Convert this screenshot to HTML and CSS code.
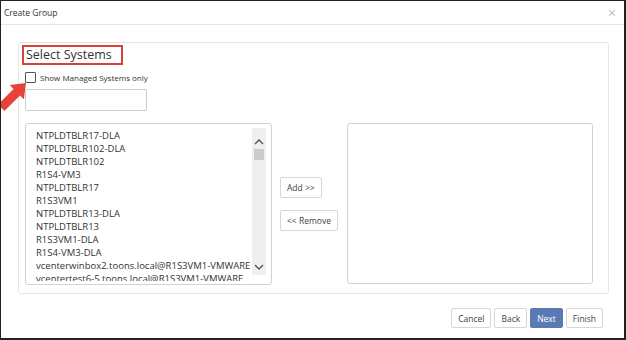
FILE: index.html
```html
<!DOCTYPE html>
<html lang="en">
<head>
  <meta charset="UTF-8" />
  <title>Create Group</title>
  <link rel="stylesheet" href="styles.css">
</head>
<body>

  <div class="dialog">
    <!-- Title bar -->
    <div class="dialog-header">
      <span class="dialog-title">Create Group</span>
      <span class="dialog-close">&times;</span>
    </div>

    <div class="dialog-body">
      <div class="panel">
        <div class="legend">Select Systems</div>

        <label class="check-row">
          <span class="checkbox"></span>
          <span>Show Managed Systems only</span>
        </label>

        <input class="filter-input" type="text" />

        <!-- Available / selected lists -->
        <div class="transfer">
          <div class="listbox">
            <ul class="list">
              <li>NTPLDTBLR17-DLA</li>
              <li>NTPLDTBLR102-DLA</li>
              <li>NTPLDTBLR102</li>
              <li>R1S4-VM3</li>
              <li>NTPLDTBLR17</li>
              <li>R1S3VM1</li>
              <li>NTPLDTBLR13-DLA</li>
              <li>NTPLDTBLR13</li>
              <li>R1S3VM1-DLA</li>
              <li>R1S4-VM3-DLA</li>
              <li>vcenterwinbox2.toons.local@R1S3VM1-VMWARE</li>
              <li>vcentertest6-5.toons.local@R1S3VM1-VMWARE</li>
            </ul>
            <div class="scrollbar">
              <svg class="scroll-arrow" width="10" height="6" viewBox="0 0 10 6"><path d="M1 5 L5 1 L9 5" fill="none" stroke="#555" stroke-width="1.4"/></svg>
              <div class="scroll-thumb"></div>
              <span class="scroll-spacer"></span>
              <svg class="scroll-arrow" width="10" height="6" viewBox="0 0 10 6"><path d="M1 1 L5 5 L9 1" fill="none" stroke="#555" stroke-width="1.4"/></svg>
            </div>
          </div>

          <div class="move-buttons">
            <button class="btn">Add &gt;&gt;</button>
            <button class="btn">&lt;&lt; Remove</button>
          </div>

          <div class="listbox listbox-selected"></div>
        </div>
      </div>
    </div>

    <div class="dialog-footer">
      <button class="btn">Cancel</button>
      <button class="btn">Back</button>
      <button class="btn btn-primary">Next</button>
      <button class="btn">Finish</button>
    </div>

    <!-- callout arrow pointing at the checkbox -->
    <svg class="callout-arrow" width="34" height="38" viewBox="0 0 34 38">
      <polygon points="25,7 22.9,23.3 19,19.4 3.4,35 -3,28.6 12.6,13 8.7,9.1" fill="#e5423a"/>
    </svg>
  </div>

</body>
</html>
```

FILE: styles.css
```css
* { box-sizing: border-box; }

body {
  margin: 0;
  font-family: "Open Sans", Arial, sans-serif;
  color: #333;
  background: #fff;
}

.dialog {
  position: relative;
  width: 626px;
  height: 340px;
  border: solid #222;
  border-width: 1px 2px 2px 1px;
  display: flex;
  flex-direction: column;
}

/* Header */
.dialog-header {
  height: 24px;
  border-bottom: 1px solid #e5e5e5;
  display: flex;
  justify-content: space-between;
  align-items: center;
  padding: 0 8px 0 3px;
}
.dialog-title {
  font-size: 8.5px;
  color: #333;
}
.dialog-close {
  font-size: 14px;
  color: #bbb;
}

/* Body panel */
.dialog-body {
  padding: 17px 15px 0 17px;
}
.panel {
  height: 252px;
  border: 1px solid #e6e6e6;
  border-radius: 3px;
  padding: 2px 14px 0 6px;
}
.legend {
  margin-left: -3px;
  height: 20px;
  width: 101px;
  border: 2px solid #d9423a;
  padding-left: 2px;
  font-size: 12.5px;
  line-height: 16px;
  color: #333;
}

.check-row {
  display: flex;
  align-items: center;
  gap: 4px;
  margin-top: 7px;
  height: 11px;
  font-size: 8px;
  color: #333;
}
.checkbox {
  width: 11px;
  height: 11px;
  border: 1px solid #555;
  border-radius: 1px;
  background: #fff;
}

.filter-input {
  display: block;
  margin-top: 6px;
  width: 122px;
  height: 22px;
  border: 1px solid #ccc;
  border-radius: 2px;
  outline: none;
}

/* Transfer lists */
.transfer {
  display: flex;
  align-items: center;
  margin-top: 12px;
}
.listbox {
  width: 247px;
  height: 162px;
  border: 1px solid #d2d2d2;
  border-radius: 3px;
  display: flex;
  background: #fff;
}
.listbox-selected {
  width: 246px;
  height: 161px;
  align-self: flex-start;
}
.list {
  flex: 1;
  list-style: none;
  margin: 0 0 3px 0;
  padding: 5px 0 0 10px;
  overflow: hidden;
  white-space: nowrap;
  font-size: 9.5px;
  line-height: 13px;
  color: #333;
}
.scrollbar {
  width: 14px;
  margin: 4px 5px 9px 0;
  background: #efefef;
  display: flex;
  flex-direction: column;
  align-items: center;
  padding: 11px 0 5px 0;
}
.scroll-thumb {
  width: 10px;
  height: 11px;
  margin-top: 4px;
  background: #cbcbcb;
}
.scroll-spacer { flex: 1; }

.move-buttons {
  display: flex;
  flex-direction: column;
  align-items: flex-start;
  gap: 12px;
  margin: 0 9px 0 8px;
}

/* Buttons */
.btn {
  height: 21px;
  padding: 0 6px;
  font-family: "Open Sans", Arial, sans-serif;
  font-size: 8.5px;
  color: #444;
  background: #fff;
  border: 1px solid #d6d6d6;
  border-radius: 2px;
}
.btn-primary {
  background: #5b7ab3;
  border-color: #5b7ab3;
  color: #fff;
}

/* Footer */
.dialog-footer {
  display: flex;
  justify-content: flex-end;
  gap: 3px;
  padding: 14px 21px 0 0;
}
.dialog-footer .btn {
  height: 20px;
  padding: 0 6px;
}

.callout-arrow {
  position: absolute;
  left: 0;
  top: 75px;
}
```
